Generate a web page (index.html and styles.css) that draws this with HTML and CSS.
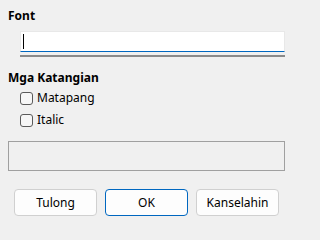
FILE: index.html
```html
<!DOCTYPE html>
<html>
<head>
<meta charset="utf-8">
<link rel="stylesheet" href="styles.css">
</head>
<body>
<div class="dialog">
  <div class="title">Font</div>
  <div class="field">
    <div class="input"><span class="caret"></span></div>
    <div class="bar"></div>
  </div>
  <div class="title title-attrs">Mga Katangian</div>
  <div class="checks">
    <label class="check"><span class="box"></span><span class="lbl">Matapang</span></label>
    <label class="check"><span class="box"></span><span class="lbl">Italic</span></label>
  </div>
  <div class="preview"></div>
  <div class="buttons">
    <button class="btn">Tulong</button>
    <button class="btn btn-default">OK</button>
    <button class="btn">Kanselahin</button>
  </div>
</div>
</body>
</html>
```
FILE: styles.css
```css
html, body {
  margin: 0;
  padding: 0;
  background: #f0f0f0;
}
body {
  width: 293px;
  height: 231px;
  overflow: hidden;
  font-family: "Noto Sans", "Open Sans", sans-serif;
  font-size: 12px;
  color: #000;
}
.dialog {
  padding: 8px 8px 0 8px;
}
.title {
  font-weight: bold;
  line-height: 16px;
  height: 16px;
}
.field {
  margin-left: 12px;
  margin-top: 7px;
}
.input {
  height: 19px;
  background: #fff;
  border: 1px solid #e8e8e8;
  border-bottom: 1px solid #0067c0;
  display: flex;
  align-items: center;
  padding-left: 2px;
}
.caret {
  width: 1px;
  height: 15px;
  background: #000;
}
.bar {
  margin-top: 3px;
  height: 2px;
  background: #8a8a8a;
}
.title-attrs {
  margin-top: 13px;
}
.checks {
  margin-top: 1px;
  padding-left: 12px;
  display: flex;
  flex-direction: column;
}
.check {
  height: 22px;
  display: flex;
  align-items: center;
  gap: 4px;
}
.box {
  width: 11px;
  height: 11px;
  border: 1px solid #5a5a5a;
  border-radius: 3px;
  background: #f6f6f6;
}
.lbl {
  line-height: 16px;
}
.preview {
  margin-top: 10px;
  height: 28px;
  border: 1px solid #a0a0a0;
  background: #f0f0f0;
}
.buttons {
  margin-top: 18px;
  padding-left: 6px;
  display: flex;
  gap: 8px;
}
.btn {
  width: 83px;
  height: 27px;
  margin: 0;
  padding: 0;
  font-family: inherit;
  font-size: 12px;
  color: #000;
  background: #fdfdfd;
  border: 1px solid #d0d0d0;
  border-radius: 4px;
}
.btn-default {
  border-color: #0067c0;
}
```
